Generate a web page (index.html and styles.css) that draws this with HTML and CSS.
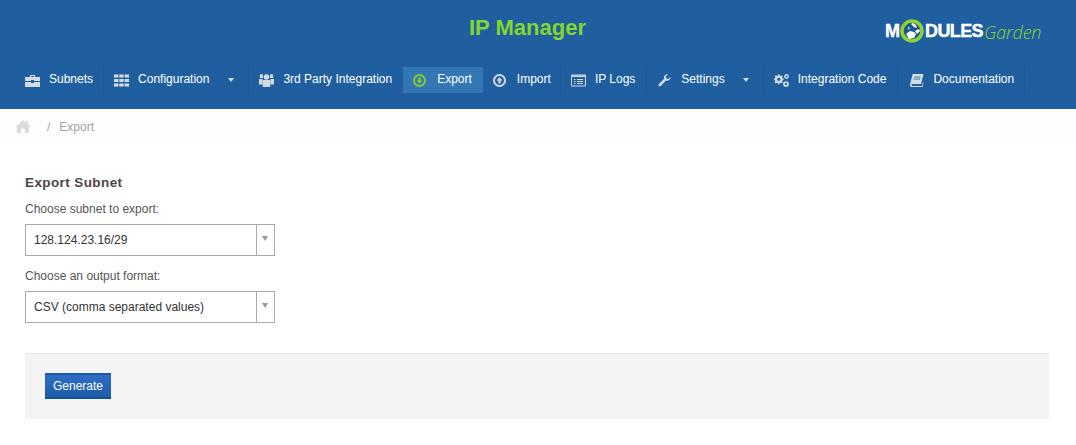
FILE: index.html
```html
<!DOCTYPE html>
<html lang="en">
<head>
<meta charset="utf-8">
<title>IP Manager</title>
<link rel="stylesheet" href="styles.css">
</head>
<body>
<header class="header">
  <div class="top">
    <h1 class="title">IP Manager</h1>
    <div class="logo">
      <span class="logo-m">M</span>
      <svg class="logo-ring" width="25" height="25" viewBox="0 0 25 25"><circle cx="12" cy="12" r="10" fill="#1c5590" stroke="#8ed62f" stroke-width="3.500"/><path d="M6 15l4-3 4 1 2 2-2 4-5 1zM15 12l4-2 1 2-3 3zM11 5l2-1 3 2 1 3-3-1zM8 8l2 1-2 2z" fill="#fff"/></svg>
      <span class="logo-b">DULES</span><span class="logo-g">Garden</span>
    </div>
  </div>
  <nav class="nav">
    <a class="item sep"><svg class="ic w15" viewBox="0 0 15 13"><path d="M5 3V1h5v2H8.800V2H6.200v1zM0 3h15v4H9V6H6v1H0zM0 8h6v1h3V8h6v5H0z" fill="#d5dbe3"/></svg><span>Subnets</span></a>
    <a class="item sep"><svg class="ic w15" viewBox="0 0 15 12"><path d="M0 0h4.400v3H0zM5.300 0h4.400v3H5.300zM10.600 0H15v3h-4.400zM0 4.500h4.400v3H0zM5.300 4.500h4.400v3H5.300zM10.600 4.500H15v3h-4.400zM0 9h4.400v3H0zM5.300 9h4.400v3H5.300zM10.600 9H15v3h-4.400z" fill="#d5dbe3"/></svg><span>Configuration</span><i class="caret"></i></a>
    <a class="item"><svg class="ic w15" viewBox="0 0 15 13"><path d="M4.700 3a2.800 2.800 0 1 1 5.600 0 2.800 2.800 0 0 1-5.600 0zM.8 1.700a1.600 1.600 0 1 1 3.200 0 4 4 0 0 0 0 2.300H.8zM11 1.700a1.600 1.600 0 1 1 3.200 0V4H11zM0 5h3.500v5.500H0zM11.500 5H15v5.500h-3.500zM3.800 6h7.400v7H3.800z" fill="#d5dbe3"/></svg><span>3rd Party Integration</span></a>
    <a class="item active"><svg class="ic w13" viewBox="0 0 13 13"><circle cx="6.500" cy="6.500" r="5.500" fill="none" stroke="#84cc2a" stroke-width="2"/><path d="M5.300 3.500h2.400v3h1.800L6.500 9.800 3.500 6.500h1.800z" fill="#84cc2a"/></svg><span>Export</span></a>
    <a class="item sep tight1"><svg class="ic w13" viewBox="0 0 13 13"><circle cx="6.500" cy="6.500" r="5.500" fill="none" stroke="#d5dbe3" stroke-width="2"/><path d="M5.300 9.500h2.400v-3h1.800L6.500 3.200 3.500 6.500h1.800z" fill="#d5dbe3"/></svg><span>Import</span></a>
    <a class="item sep wide1"><svg class="ic w15" viewBox="0 0 15 12"><path d="M.5.5h14v11H.5z" fill="none" stroke="#d5dbe3"/><path d="M1 1h13v1.500H1zM3 4.500h1.500v1H3zM6 4.500h6v1H6zM3 6.500h1.500v1H3zM6 6.500h6v1H6zM3 8.500h1.500v1H3zM6 8.500h6v1H6z" fill="#d5dbe3"/></svg><span>IP Logs</span></a>
    <a class="item sep narrow1"><svg class="ic w15" viewBox="0 0 14 14"><path d="M13.500 3.500a3.800 3.800 0 0 1-5 3.600L3 13a1.500 1.500 0 0 1-2.200-2L6.600 5.200A3.800 3.800 0 0 1 10.800.3L8.500 2.600l.5 2.200 2.200.5 2.200-2.300z" fill="#d5dbe3"/></svg><span>Settings</span><i class="caret"></i></a>
    <a class="item sep wide2"><svg class="ic w15" viewBox="0 0 15 13"><path d="M5.500 1.500l1.300.5.9-.8 1.100 1.100-.7.900.5 1.200 1.100.2v1.500l-1.100.2-.5 1.200.7.900-1.100 1.100-.9-.8-1.300.5-.2 1.100H4l-.2-1.100-1.200-.5-.9.8-1.100-1.100.7-.9L.8 6.300 0 6V4.500l1-.2.500-1.200-.7-.9 1.100-1.100.9.800L4 1.400 4.200.3h1.100z" fill="#d5dbe3"/><circle cx="4.800" cy="5.300" r="1.600" fill="#1f5f9f"/><circle cx="12.500" cy="2.500" r="1.700" fill="none" stroke="#d5dbe3" stroke-width="1.500"/><circle cx="12" cy="10" r="2" fill="none" stroke="#d5dbe3" stroke-width="1.700"/></svg><span>Integration Code</span></a>
    <a class="item sep"><svg class="ic w15" viewBox="0 0 14 13"><path d="M3.200 0H14l-2.500 10H3a1 1 0 0 0 0 2h9.500l1-4 .5 1-1 4H2.500Q0 13 .5 10.500z" fill="#d5dbe3"/><path d="M4.500 3H11M4 5h6.500" stroke="#1f5f9f" stroke-width=".8"/></svg><span>Documentation</span></a>
  </nav>
</header>
<div class="crumbs">
  <svg class="home" width="16" height="13" viewBox="0 0 16 13"><path d="M8 0l3 2.600V1h2v3.300L16 7h-2v6H9.800V8.500H6.200V13H2V7H0z" fill="#dcdcdc"/></svg>
  <span class="slash">/</span><span>Export</span>
</div>
<main class="main">
  <h2 class="heading">Export Subnet</h2>
  <label class="label">Choose subnet to export:</label>
  <div class="select"><span class="value">128.124.23.16/29</span><span class="arrow"></span></div>
  <label class="label">Choose an output format:</label>
  <div class="select"><span class="value">CSV (comma separated values)</span><span class="arrow"></span></div>
  <div class="actions"><button class="btn">Generate</button></div>
</main>
</body>
</html>
```
FILE: styles.css
```css
* { box-sizing: border-box; }
html, body { margin: 0; padding: 0; }
body { width: 1076px; height: 445px; overflow: hidden; background: #fff; font-family: "Liberation Sans", Arial, sans-serif; font-size: 12px; color: #555; }
.header { height: 109px; background: #1f5f9f; }
.top { height: 56px; display: flex; align-items: center; justify-content: center; position: relative; padding-right: 21px; }
.title { margin: 0 0 1px; font-size: 22px; font-weight: bold; line-height: 56px; color: #84d62f; }
.logo { position: absolute; left: 885px; top: 19px; height: 25px; display: flex; align-items: center; color: #fff; font-weight: bold; font-size: 18px; }
.logo-m { width: 15px; -webkit-text-stroke: .4px #fff; }
.logo-ring { flex: none; }
.logo-b { letter-spacing: -.6px; -webkit-text-stroke: .4px #fff; }
.logo-g { margin-left: 1px; color: #8ed62f; font-weight: 300; font-style: italic; font-family: "Open Sans", sans-serif; font-size: 18px; letter-spacing: -.2px; }
.nav { display: flex; padding: 11px 0 0 15px; height: 37px; }
.item { height: 26px; display: flex; align-items: center; padding: 0 10px; color: #fff; font-size: 12px; text-decoration: none; white-space: nowrap; border-right: 1px solid transparent; }
.item span { display: block; margin-bottom: 2px; }
.sep { border-right-color: #1c5993; }
.tight1 { padding-right: 9px; }
.wide1 { padding-right: 11px; }
.narrow1 .caret { margin-left: 18px; margin-right: 4px; }
.wide2 { padding-right: 12px; }
.active { background: #3377b5; }
.ic { display: block; flex: none; margin-right: 9px; }
.w15 { width: 15px; height: 13px; }
.w13 { width: 13px; height: 13px; margin-right: 11px; }
.caret { display: block; margin-left: 19px; margin-right: 4px; width: 0; height: 0; border: 3.500px solid transparent; border-top: 4px solid #d5dbe3; border-bottom: 0; }
.crumbs { height: 35px; background: #fefcfc; display: flex; align-items: center; padding-left: 15px; color: #a3a3a3; font-size: 12px; }
.home { margin-right: 16px; }
.slash { margin-right: 9px; }
.main { padding: 0 27px 0 25px; }
.heading { margin: 31px 0 0; font-size: 13.500px; line-height: 15px; font-weight: bold; color: #4d4545; letter-spacing: .4px; }
.label { display: block; margin-top: 12px; line-height: 14px; font-size: 12px; color: #555; }
.select { margin-top: 8px; width: 250px; height: 32px; border: 1px solid #aaa; display: flex; background: #fff; }
.select + .label { margin-top: 13px; }
.value { flex: 1; padding-left: 8px; line-height: 30px; font-size: 12px; color: #333; }
.arrow { width: 18px; border-left: 1px solid #aaa; position: relative; }
.arrow::after { content: ""; position: absolute; left: 5px; top: 11px; border: 3px solid transparent; border-top: 5px solid #999; border-bottom: 0; }
.actions { margin-top: 30px; height: 66px; background: #f4f4f4; border-top: 1px solid #e5e5e5; padding: 19px 20px 0; }
.btn { display: block; width: 66px; height: 26px; padding: 0; border: 0; border-top: 2px solid #1a5cab; border-bottom: 2px solid #0f519b; background: linear-gradient(#2e6dc4, #1f5ca8); color: #fff; font-family: inherit; font-size: 12px; }
```
